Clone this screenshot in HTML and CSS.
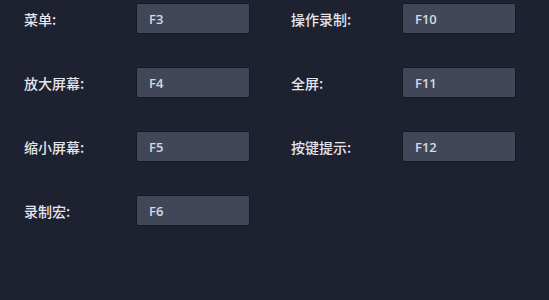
FILE: index.html
```html
<!DOCTYPE html>
<html lang="zh-CN">
<head>
<meta charset="utf-8">
<link rel="stylesheet" href="styles.css">
</head>
<body>
<div class="panel">
  <div class="col">
    <div class="row"><span class="label">菜单:</span><span class="key">F3</span></div>
    <div class="row"><span class="label">放大屏幕:</span><span class="key">F4</span></div>
    <div class="row"><span class="label">缩小屏幕:</span><span class="key">F5</span></div>
    <div class="row"><span class="label">录制宏:</span><span class="key">F6</span></div>
  </div>
  <div class="col">
    <div class="row"><span class="label">操作录制:</span><span class="key">F10</span></div>
    <div class="row"><span class="label">全屏:</span><span class="key">F11</span></div>
    <div class="row"><span class="label">按键提示:</span><span class="key">F12</span></div>
  </div>
</div>
</body>
</html>
```
FILE: styles.css
```css
html, body {
  margin: 0;
  padding: 0;
  background: #1e2130;
  width: 549px;
  height: 300px;
  overflow: hidden;
}
body {
  font-family: "Noto Sans CJK SC", "Noto Sans", sans-serif;
}
.panel {
  display: flex;
  gap: 41px;
  padding: 3px 0 0 24px;
}
.col {
  display: flex;
  flex-direction: column;
  gap: 33px;
}
.row {
  display: flex;
  align-items: center;
  height: 31px;
}
.label {
  width: 112px;
  font-size: 14px;
  color: #e4e6ec;
  font-weight: 500;
}
.col + .col .label {
  width: 111px;
}
.key {
  box-sizing: border-box;
  width: 114px;
  height: 31px;
  background: #414759;
  border: 1px solid #181a22;
  border-radius: 2px;
  padding-left: 12px;
  font-family: "Open Sans", "Noto Sans", sans-serif;
  font-size: 13px;
  font-weight: 600;
  color: #d6d9e1;
  display: flex;
  align-items: center;
}
```
